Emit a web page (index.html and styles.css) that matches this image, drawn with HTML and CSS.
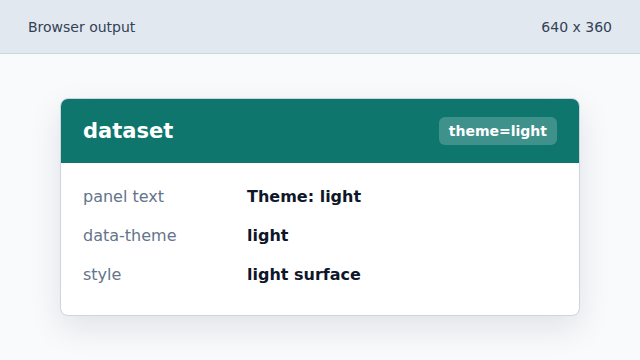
FILE: index.html
```html
<!DOCTYPE html>
<html lang="en">
<head>
<meta charset="utf-8">
<title>dataset</title>
<link rel="stylesheet" href="styles.css">
</head>
<body>
<header class="topbar">
  <span class="topbar-title">Browser output</span>
  <span class="topbar-size">640 x 360</span>
</header>
<main class="stage">
  <section class="card">
    <div class="card-head">
      <h1 class="card-title">dataset</h1>
      <span class="badge">theme=light</span>
    </div>
    <dl class="rows">
      <dt class="label">panel text</dt>
      <dd class="value">Theme: light</dd>
      <dt class="label">data-theme</dt>
      <dd class="value">light</dd>
      <dt class="label">style</dt>
      <dd class="value">light surface</dd>
    </dl>
  </section>
</main>
</body>
</html>
```
FILE: styles.css
```css
* { box-sizing: border-box; }
html, body { margin: 0; padding: 0; }
body {
  width: 640px;
  height: 360px;
  overflow: hidden;
  background: #f8fafc;
  font-family: "DejaVu Sans", "Liberation Sans", sans-serif;
  color: #0f172a;
}
.topbar {
  height: 54px;
  background: #e2e8f0;
  border-bottom: 1px solid #cbd5e1;
  display: flex;
  align-items: center;
  justify-content: space-between;
  padding: 0 28px;
  font-size: 14px;
  color: #334155;
}
.stage {
  padding: 44px 60px 0;
}
.card {
  width: 520px;
  background: #ffffff;
  border: 1px solid #cbd5e1;
  border-radius: 8px;
  overflow: hidden;
  box-shadow: 0 12px 32px rgba(15, 23, 42, 0.10);
}
.card-head {
  background: #0f766e;
  display: flex;
  align-items: center;
  justify-content: space-between;
  padding: 18px 22px;
  height: 64px;
}
.card-title {
  margin: 0;
  font-size: 21px;
  font-weight: bold;
  color: #ffffff;
  line-height: 25px;
}
.badge {
  height: 28px;
  line-height: 28px;
  padding: 0 10px;
  border-radius: 6px;
  background: rgba(255, 255, 255, 0.2);
  color: #ffffff;
  font-size: 14px;
  font-weight: bold;
}
.rows {
  margin: 0;
  display: grid;
  grid-template-columns: 164px 1fr;
  row-gap: 15px;
  padding: 22px 22px 28px;
  font-size: 16px;
  line-height: 24px;
}
.label {
  margin: 0;
  color: #64748b;
}
.value {
  margin: 0;
  font-weight: bold;
  color: #0f172a;
}
```
